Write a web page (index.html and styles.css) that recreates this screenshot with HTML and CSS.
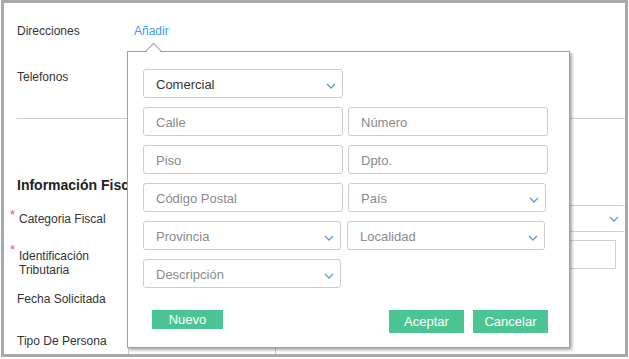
FILE: index.html
```html
<!DOCTYPE html>
<html lang="es">
<head>
  <meta charset="UTF-8" />
  <title>Direcciones</title>
  <link rel="stylesheet" href="styles.css">
</head>
<body>
  <div class="frame">
    <div class="row">
      <span class="label">Direcciones</span>
      <a class="link">Añadir</a>
    </div>
    <div class="row row-phones">
      <span class="label">Telefonos</span>
    </div>
    <div class="divider"></div>

    <h3 class="section-title">Información Fiscal</h3>

    <div class="field field-category">
      <span class="label req">Categoria Fiscal</span>
      <div class="box wide">
        <span></span>
        <svg class="chev" width="10" height="6" viewBox="0 0 10 6"><path d="M1 1l4 4 4-4" fill="none" stroke="#5b9bd5" stroke-width="1.3"/></svg>
      </div>
    </div>
    <div class="field field-tax">
      <span class="label req two-lines">Identificación<br>Tributaria</span>
      <div class="box input-box"></div>
    </div>
    <div class="field field-date">
      <span class="label">Fecha Solicitada</span>
    </div>
    <div class="field field-type">
      <span class="label">Tipo De Persona</span>
      <div class="box type-box"></div>
    </div>

    <!-- Popover: nueva dirección -->
    <div class="popover">
      <div class="arrow"></div>
      <div class="addr-grid">
        <div class="control select value">Comercial
          <svg class="chev" width="10" height="6" viewBox="0 0 10 6"><path d="M1 1l4 4 4-4" fill="none" stroke="#5b9bd5" stroke-width="1.3"/></svg>
        </div>
        <div></div>
        <div class="control">Calle</div>
        <div class="control">Número</div>
        <div class="control">Piso</div>
        <div class="control">Dpto.</div>
        <div class="control">Código Postal</div>
        <div class="control select narrow">País
          <svg class="chev" width="10" height="6" viewBox="0 0 10 6"><path d="M1 1l4 4 4-4" fill="none" stroke="#5b9bd5" stroke-width="1.3"/></svg>
        </div>
        <div class="control select narrow">Provincia
          <svg class="chev" width="10" height="6" viewBox="0 0 10 6"><path d="M1 1l4 4 4-4" fill="none" stroke="#5b9bd5" stroke-width="1.3"/></svg>
        </div>
        <div class="control select narrow shift">Localidad
          <svg class="chev" width="10" height="6" viewBox="0 0 10 6"><path d="M1 1l4 4 4-4" fill="none" stroke="#5b9bd5" stroke-width="1.3"/></svg>
        </div>
        <div class="control select narrow">Descripción
          <svg class="chev" width="10" height="6" viewBox="0 0 10 6"><path d="M1 1l4 4 4-4" fill="none" stroke="#5b9bd5" stroke-width="1.3"/></svg>
        </div>
      </div>
      <div class="pop-actions">
        <button class="btn btn-new">Nuevo</button>
        <div class="pop-right">
          <button class="btn">Aceptar</button>
          <button class="btn">Cancelar</button>
        </div>
      </div>
    </div>
  </div>
</body>
</html>
```

FILE: styles.css
```css
/* Base */
body {
  margin: 0;
  background: #fff;
  font-family: 'Liberation Sans', Arial, sans-serif;
  font-size: 12px;
  color: #333;
}

/* Outer frame */
.frame {
  position: relative;
  margin-left: 1px;
  width: 621px;
  height: 338px;
  border: 3px solid #a9a9a9;
  padding-top: 13px;
  box-sizing: content-box;
  overflow: hidden;
  background: #fff;
}

.row {
  display: flex;
  align-items: center;
  height: 28px;
  padding-left: 13px;
}

.row .label {
  width: 117px;
}

.label {
  padding-top: 2px;
}

.row-phones {
  margin-top: 18px;
}

.link {
  color: #3a9cf0;
  cursor: pointer;
  font-size: 12px;
  padding-top: 2px;
}

.divider {
  height: 1px;
  background: #cfcfcf;
  margin: 28px 0 0 13px;
}

.section-title {
  margin: 56px 0 0 13px;
  font-size: 14px;
  line-height: 20px;
  font-weight: 700;
  color: #222;
}

/* Fiscal fields */
.field {
  display: flex;
  align-items: center;
  padding-left: 15px;
}

.field .label {
  position: relative;
  width: 115px;
  flex-shrink: 0;
}

.req::before {
  content: '*';
  position: absolute;
  left: -9px;
  top: -5px;
  color: #f0506e;
  font-size: 13px;
}

.field-category {
  margin-top: 10px;
}

.field-category .label {
  padding-top: 0;
}

.field-tax {
  margin-top: 8px;
  align-items: flex-start;
}

.field .two-lines {
  padding-top: 9px;
  line-height: 14px;
}

.field-tax .label::before {
  top: 3px;
}

.field-date {
  margin-top: 7px;
  height: 28px;
  padding-left: 13px;
}

.field-type {
  margin-top: 14px;
  height: 28px;
  padding-left: 13px;
  align-items: flex-start;
}

.field-type .label {
  padding-top: 8px;
}

.box {
  border: 1px solid #cfcfcf;
  border-radius: 3px;
  box-sizing: border-box;
  background: #fff;
}

.wide {
  flex: 1;
  height: 27px;
  display: flex;
  justify-content: space-between;
  align-items: center;
  padding-right: 6px;
  border-right: none;
}

.input-box {
  flex: 1;
  height: 29px;
  margin-right: 9px;
  border-radius: 0;
}

.type-box {
  width: 148px;
  height: 40px;
  margin-left: -4px;
  border-radius: 0;
}

/* Popover */
.popover {
  position: absolute;
  left: 123px;
  top: 48px;
  width: 443px;
  height: 297px;
  box-sizing: border-box;
  padding: 17px 21px 0 15px;
  background: #fff;
  border: 1px solid #a0a0a0;
  box-shadow: 2px 2px 3px rgba(0, 0, 0, 0.35);
}

.arrow {
  position: absolute;
  left: 20px;
  top: -7px;
  width: 10px;
  height: 10px;
  background: #fff;
  border-top: 1px solid #a0a0a0;
  border-left: 1px solid #a0a0a0;
  transform: rotate(45deg);
}

.addr-grid {
  display: grid;
  grid-template-columns: 200px 200px;
  grid-auto-rows: 29px;
  column-gap: 5px;
  row-gap: 9px;
}

.control {
  display: flex;
  align-items: center;
  justify-content: space-between;
  padding: 2px 6px 0 12px;
  border: 1px solid #cccccc;
  border-radius: 3px;
  box-sizing: border-box;
  font-size: 13px;
  color: #8a8a8a;
}

.control.value {
  color: #333;
}

.control .chev {
  margin-top: 2px;
}

.narrow {
  width: 198px;
}

.shift {
  margin-left: -1px;
}

.pop-actions {
  display: flex;
  justify-content: space-between;
  align-items: flex-start;
  margin-top: 22px;
}

.pop-right {
  display: flex;
  gap: 9px;
}

.btn {
  width: 75px;
  height: 23px;
  padding: 0;
  border: none;
  background: #4cc594;
  color: #fff;
  font-family: 'Liberation Sans', Arial, sans-serif;
  font-size: 13px;
  cursor: pointer;
}

.btn-new {
  width: 71px;
  height: 19px;
  margin-left: 9px;
}
```
